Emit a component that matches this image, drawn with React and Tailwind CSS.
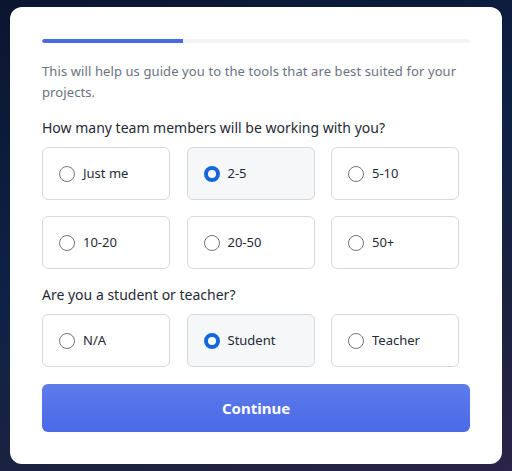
import React, { useState } from 'react';

const teamSizes = ['Just me', '2-5', '5-10', '10-20', '20-50', '50+'];
const roles = ['N/A', 'Student', 'Teacher'];

const Radio = ({ checked }) => (
  <span
    className={
      checked
        ? 'w-4 h-4 rounded-full border-[4px] border-[#1667d9] bg-white shrink-0'
        : 'w-4 h-4 rounded-full border border-[#767676] bg-white shrink-0'
    }
  />
);

const Option = ({ label, checked, onClick }) => (
  <button
    onClick={onClick}
    className={`h-[53px] flex items-center gap-2 pl-4 rounded-md border border-[#d6d9de] text-left text-[13px] text-[#1f2937] ${
      checked ? 'bg-[#f5f7f9]' : 'bg-white'
    }`}
  >
    <Radio checked={checked} />
    <span>{label}</span>
  </button>
);

export default function App() {
  const [team, setTeam] = useState('2-5');
  const [role, setRole] = useState('Student');

  return (
    <div
      className="w-[512px] h-[471px] pt-[7px] px-[10px] bg-[linear-gradient(160deg,#0b1530_0%,#0e2146_45%,#1c2240_75%,#2b2348_100%)]"
      style={{ fontFamily: '"Segoe UI", "Noto Sans", "Open Sans", sans-serif' }}
    >
      <div className="bg-white rounded-xl h-[457px] px-8 pt-8">
        <div className="h-[4px] rounded-full bg-[#f3f4f6] overflow-hidden">
          <div className="h-full w-[141px] bg-[#4a69e2] rounded-l-full" />
        </div>

        <p className="mt-[18px] text-[13px] leading-[21px] text-[#6b7280] tracking-[0.1px]">
          This will help us guide you to the tools that are best suited for your projects.
        </p>

        <p className="mt-[16px] text-[14px] leading-[18px] text-[#1f2937]">
          How many team members will be working with you?
        </p>
        <div className="mt-[10px] grid grid-cols-[128px_128px_128px] gap-x-[16.5px] gap-y-[16px]">
          {teamSizes.map((t) => (
            <Option key={t} label={t} checked={team === t} onClick={() => setTeam(t)} />
          ))}
        </div>

        <p className="mt-[17px] text-[14px] leading-[18px] text-[#1f2937]">
          Are you a student or teacher?
        </p>
        <div className="mt-[10px] grid grid-cols-[128px_128px_128px] gap-x-[16.5px]">
          {roles.map((r) => (
            <Option key={r} label={r} checked={role === r} onClick={() => setRole(r)} />
          ))}
        </div>

        <button className="mt-[17px] w-full h-[48px] rounded-md bg-[linear-gradient(180deg,#5d7ce9_0%,#4a69e8_100%)] text-white text-[15px] font-bold">
          Continue
        </button>
      </div>
    </div>
  );
}
